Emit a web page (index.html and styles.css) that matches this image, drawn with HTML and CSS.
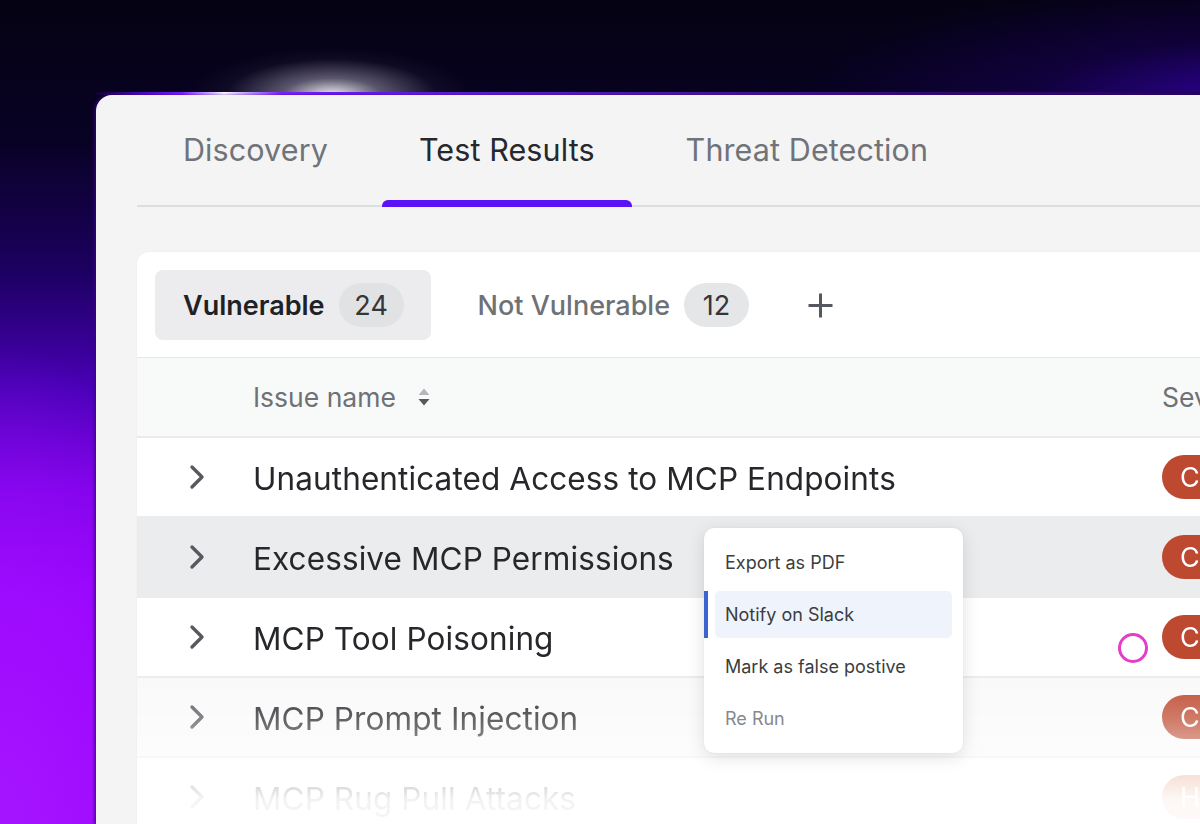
FILE: index.html
```html
<!DOCTYPE html>
<html lang="en">
<head>
<meta charset="utf-8">
<title>Test Results</title>
<link rel="stylesheet" href="styles.css">
</head>
<body>
<div class="stage">
  <div class="glowline"></div>
  <div class="window">
    <nav class="nav">
      <div class="tab">Discovery</div>
      <div class="tab active">Test Results</div>
      <div class="tab">Threat Detection</div>
    </nav>
    <section class="card">
      <div class="filters">
        <div class="pill active">Vulnerable <span class="count">24</span></div>
        <div class="pill">Not Vulnerable <span class="count">12</span></div>
        <div class="plus">
          <svg width="27" height="27" viewBox="0 0 27 27"><path d="M13.5 1.5v24M1.5 13.5h24" stroke="#55595f" stroke-width="3" fill="none"/></svg>
        </div>
      </div>
      <div class="thead">
        <div></div>
        <div class="th">Issue name
          <svg class="sort" width="14" height="20" viewBox="0 0 14 20"><path d="M7 1.5L12.5 8H1.5Z" fill="#b3b6bb"/><path d="M7 18.5L12.5 12H1.5Z" fill="#55585d"/></svg>
        </div>
        <div class="th">Severity</div>
      </div>
      <div class="rows">
        <div class="row">
          <div class="chev"><svg width="16" height="26" viewBox="0 0 16 26"><path d="M3 3L13 13L3 23" stroke="#56595e" stroke-width="3.4" fill="none" stroke-linecap="round" stroke-linejoin="round"/></svg></div>
          <div class="name">Unauthenticated Access to MCP Endpoints</div>
          <div><span class="sev">Critical</span></div>
        </div>
        <div class="row hover">
          <div class="chev"><svg width="16" height="26" viewBox="0 0 16 26"><path d="M3 3L13 13L3 23" stroke="#56595e" stroke-width="3.4" fill="none" stroke-linecap="round" stroke-linejoin="round"/></svg></div>
          <div class="name">Excessive MCP Permissions</div>
          <div><span class="sev">Critical</span></div>
        </div>
        <div class="row">
          <div class="chev"><svg width="16" height="26" viewBox="0 0 16 26"><path d="M3 3L13 13L3 23" stroke="#56595e" stroke-width="3.4" fill="none" stroke-linecap="round" stroke-linejoin="round"/></svg></div>
          <div class="name">MCP Tool Poisoning</div>
          <div><span class="sev">Critical</span></div>
        </div>
        <div class="row soft">
          <div class="chev"><svg width="16" height="26" viewBox="0 0 16 26"><path d="M3 3L13 13L3 23" stroke="#56595e" stroke-width="3.4" fill="none" stroke-linecap="round" stroke-linejoin="round"/></svg></div>
          <div class="name">MCP Prompt Injection</div>
          <div><span class="sev">Critical</span></div>
        </div>
        <div class="row">
          <div class="chev"><svg width="16" height="26" viewBox="0 0 16 26"><path d="M3 3L13 13L3 23" stroke="#56595e" stroke-width="3.4" fill="none" stroke-linecap="round" stroke-linejoin="round"/></svg></div>
          <div class="name">MCP Rug Pull Attacks</div>
          <div><span class="sev high">High</span></div>
        </div>
      </div>
      <div class="menu">
        <div class="item">Export as PDF</div>
        <div class="item selected">Notify on Slack</div>
        <div class="item">Mark as false postive</div>
        <div class="item muted">Re Run</div>
      </div>
      <div class="cursor"></div>
    </section>
  </div>
</div>
</body>
</html>
```

FILE: styles.css
```css
* { box-sizing: border-box; }

html, body {
  margin: 0;
  padding: 0;
}

body {
  font-family: Inter, "Noto Sans", sans-serif;
  background: #05020f;
}

.stage {
  width: 1200px;
  height: 824px;
  overflow: hidden;
  padding: 92px 0 0 96px;
  background:
    radial-gradient(ellipse 140px 48px at 332px 95px, rgba(248,248,252,0.95) 0%, rgba(160,155,175,0.55) 35%, rgba(50,45,70,0.2) 75%, rgba(0,0,0,0) 100%),
    radial-gradient(ellipse 460px 120px at 1260px 100px, rgba(50,0,160,0.95) 0%, rgba(25,0,90,0.5) 50%, rgba(0,0,0,0) 100%),
    radial-gradient(ellipse 240px 480px at 0 824px, rgba(165,20,255,1) 0%, rgba(0,0,0,0) 100%),
    linear-gradient(to bottom, #050213 0px, #080224 140px, #1c0060 270px, #4a00b8 390px, #7c00e8 490px, #9400fc 590px, #9a00ff 700px, #9c05ff 824px);
}

.glowline {
  height: 3px;
  width: 1104px;
  background: linear-gradient(to right, #12002e 0px, #4e0bc8 50px, #7a1cff 85px, #d9c4ff 118px, #ffffff 128px, #c5a6ff 150px, #7b22ff 185px, #6c18f5 240px, #5a1fd0 380px, #45189a 600px, #2d0a6a 850px, #22065a 1104px);
}

.window {
  width: 1104px;
  height: 729px;
  background: #f4f4f5;
  border-top-left-radius: 16px;
  padding-left: 41px;
  box-shadow: -2px 0 3px rgba(60, 0, 140, 0.7);
}

.nav {
  display: flex;
  height: 112px;
  padding-left: 9px;
  gap: 17px;
  border-bottom: 2px solid #dddee1;
}

.tab {
  position: relative;
  display: flex;
  align-items: center;
  padding: 0 37px 2px;
  font-size: 30.5px;
  color: #707378;
  letter-spacing: 0.1px;
}

.tab.active {
  color: #26282c;
}

.tab.active::after {
  content: "";
  position: absolute;
  left: 0;
  right: 0;
  bottom: -2px;
  height: 7px;
  border-radius: 6px 6px 0 0;
  background: #5b12f6;
}

.card {
  position: relative;
  margin-top: 45px;
  width: 1200px;
  height: 580px;
  background: #ffffff;
  border-top-left-radius: 12px;
  box-shadow: 0 0 3px rgba(0, 0, 0, 0.04);
  overflow: hidden;
}

.filters {
  display: flex;
  align-items: center;
  gap: 19px;
  padding: 18px 18px 17px;
  border-bottom: 1px solid #e6e7e9;
}

.pill {
  display: flex;
  align-items: center;
  gap: 14px;
  height: 70px;
  padding: 0 27px 0 28px;
  border-radius: 8px;
  font-size: 27px;
  font-weight: 500;
  color: #6e7176;
}

.pill.active {
  background: #ececee;
  color: #1f2124;
  font-weight: 600;
}

.count {
  display: flex;
  align-items: center;
  justify-content: center;
  height: 44px;
  min-width: 65px;
  border-radius: 22px;
  background: #e5e6e8;
  font-weight: 400;
  color: #34363a;
}

.pill.active .count {
  background: #e1e2e4;
}

.plus {
  display: flex;
  align-items: center;
  margin-left: 12px;
}

.thead {
  display: grid;
  grid-template-columns: 116px 909px 1fr;
  align-items: center;
  height: 80px;
  background: #f8f9f9;
  border-bottom: 2px solid #e9eaec;
}

.th {
  display: flex;
  align-items: center;
  gap: 21px;
  font-size: 26.5px;
  color: #6e7176;
}

.rows {
  -webkit-mask-image: linear-gradient(to bottom, #000 0px, #000 235px, rgba(0,0,0,0.72) 282px, rgba(0,0,0,0.06) 362px, rgba(0,0,0,0.03) 400px);
  mask-image: linear-gradient(to bottom, #000 0px, #000 235px, rgba(0,0,0,0.72) 282px, rgba(0,0,0,0.06) 362px, rgba(0,0,0,0.03) 400px);
}

.row {
  display: grid;
  grid-template-columns: 116px 909px 1fr;
  align-items: center;
  height: 80px;
  border-bottom: 2px solid #ebecee;
}

.row.hover {
  background: #ebeced;
}

.row.soft {
  background: #f9f9fa;
}

.chev {
  display: flex;
  justify-content: flex-end;
  padding-right: 48px;
}

.name {
  font-size: 31.5px;
  color: #25272a;
  letter-spacing: 0.1px;
  padding-top: 2px;
}

.sev {
  display: inline-flex;
  align-items: center;
  height: 44px;
  padding: 0 16px 0 18px;
  border-radius: 22px;
  background: #bd4a30;
  color: #ffffff;
  font-size: 27px;
}

.sev.high {
  background: #e08a6a;
}

.menu {
  position: absolute;
  left: 567px;
  top: 276px;
  width: 259px;
  padding: 11px;
  display: flex;
  flex-direction: column;
  gap: 5px;
  background: #ffffff;
  border-radius: 10px;
  box-shadow: 0 4px 18px rgba(0, 0, 0, 0.12), 0 0 2px rgba(0, 0, 0, 0.06);
}

.item {
  position: relative;
  display: flex;
  align-items: center;
  height: 47px;
  padding: 0 10px;
  border-radius: 5px;
  font-size: 18px;
  color: #3b3d41;
}

.item.selected {
  background: #eff3fb;
}

.item.selected::before {
  content: "";
  position: absolute;
  left: -11px;
  top: 0;
  bottom: 0;
  width: 4px;
  background: #3b64cf;
}

.item.muted {
  color: #86898e;
}

.cursor {
  position: absolute;
  left: 981px;
  top: 381px;
  width: 30px;
  height: 30px;
  border: 3px solid #e53cca;
  border-radius: 50%;
}
```
